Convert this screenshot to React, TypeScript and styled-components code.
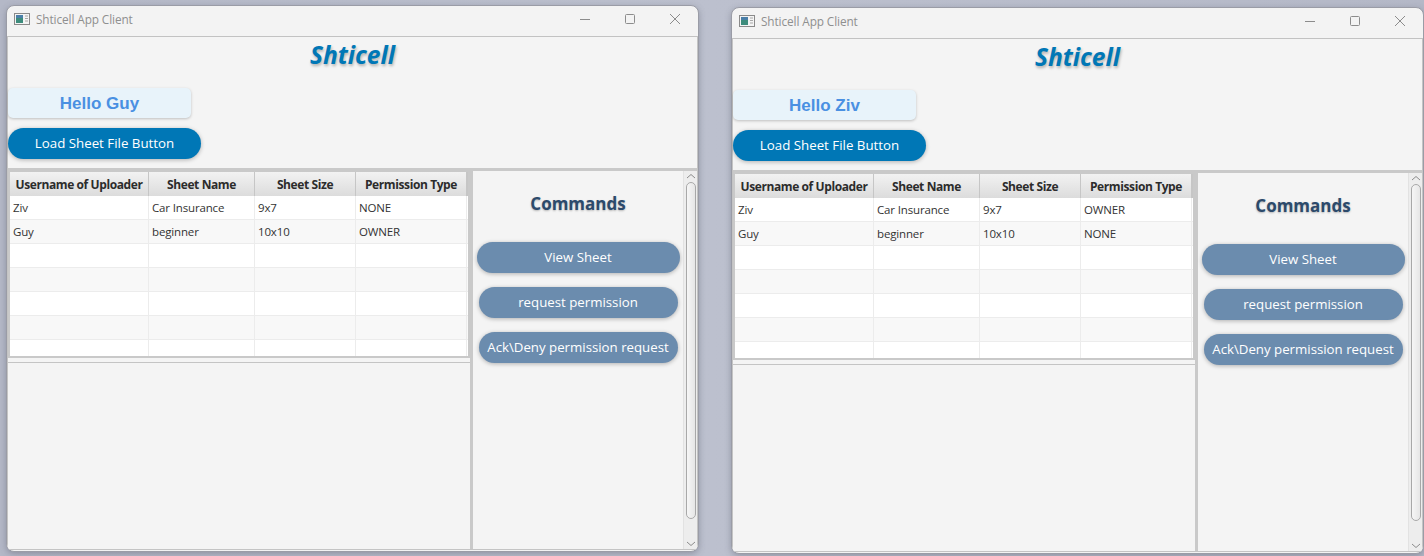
import { createGlobalStyle, styled } from "styled-components";

const GlobalStyle = createGlobalStyle`
  html, body {
    margin: 0;
    padding: 0;
    background: #b9bdcb;
    overflow: hidden;
  }
  #root {
    width: 1424px;
    height: 556px;
  }
`;

const Desktop = styled.div`
  position: relative;
  width: 1424px;
  height: 556px;
  overflow: hidden;
  background: linear-gradient(90deg, #b4b8c7 0%, #bcc0ce 50%, #b4b8c7 100%);
  font-family: "Open Sans", "Noto Sans", sans-serif;
`;

const Window = styled.div<{ $left: number; $top: number }>`
  position: absolute;
  left: ${(p) => p.$left}px;
  top: ${(p) => p.$top}px;
  width: 693px;
  height: 547px;
  box-sizing: border-box;
  display: flex;
  flex-direction: column;
  background: #f3f3f3;
  border: 1px solid #9a9ca6;
  border-radius: 8px;
  overflow: hidden;
  box-shadow: 0 2px 6px rgba(70, 72, 90, 0.35);
`;

const TitleBar = styled.div`
  height: 26px;
  flex: none;
  display: flex;
  align-items: center;
  padding: 0 1px 4px 7px;
  color: #8f8f8f;
  font-size: 11.8px;
`;

const AppIcon = styled.svg`
  width: 16px;
  height: 14px;
  margin-right: 6px;
`;

const WindowTitle = styled.span`
  flex: 1;
  letter-spacing: -0.1px;
`;

const CaptionButton = styled.div`
  width: 45px;
  height: 26px;
  display: flex;
  align-items: center;
  justify-content: center;
`;

const Scene = styled.div`
  flex: 1;
  min-height: 0;
  display: flex;
  flex-direction: column;
  margin-bottom: 1px;
  background: #f4f4f4;
  border: 1px solid #c4c4c4;
  border-top-color: #c2c2c2;
`;

const Header = styled.div`
  height: 134px;
  flex: none;
  box-sizing: border-box;
  display: flex;
  flex-direction: column;
  align-items: flex-start;
  border-bottom: 3px solid #c9c9c9;
`;

const AppTitle = styled.div`
  align-self: stretch;
  height: 51px;
  padding-top: 2px;
  box-sizing: border-box;
  text-align: center;
  font-size: 24.5px;
  line-height: 32px;
  font-weight: 700;
  font-style: italic;
  color: #0077b6;
  text-shadow: 1px 2px 3px rgba(0, 0, 0, 0.28);
`;

const Greeting = styled.div`
  width: 183px;
  height: 30px;
  box-sizing: border-box;
  padding-top: 2px;
  display: flex;
  align-items: center;
  justify-content: center;
  background: #e8f3fa;
  border-radius: 5px;
  color: #4a90e2;
  font-family: "Liberation Sans", Arial, sans-serif;
  font-size: 17px;
  font-weight: 700;
  box-shadow: 0 1px 3px rgba(0, 0, 0, 0.22);
`;

const LoadButton = styled.div`
  margin-top: 10px;
  width: 193px;
  height: 31px;
  box-sizing: border-box;
  padding-bottom: 1px;
  display: flex;
  align-items: center;
  justify-content: center;
  background: #0077b6;
  border-radius: 16px;
  color: #fff;
  font-size: 13.3px;
  box-shadow: 0 1px 4px rgba(0, 0, 0, 0.28);
`;

const Body = styled.div`
  flex: 1;
  min-height: 0;
  display: flex;
`;

const LeftPane = styled.div`
  width: 462px;
  flex: none;
  display: flex;
  flex-direction: column;
  border-right: 3px solid #c9c9c9;
`;

const TableFrame = styled.div`
  height: 187px;
  flex: none;
  box-sizing: border-box;
  border: 2px solid #c9c9c9;
  border-top-width: 1px;
  background: #fff;
  overflow: hidden;
`;

const TableRow = styled.div<{ $odd?: boolean }>`
  display: grid;
  grid-template-columns: 139px 106px 101px 111px 1fr;
  height: 24px;
  box-sizing: border-box;
  background: ${(p) => (p.$odd ? "#f8f8f8" : "#ffffff")};
  border-bottom: 1px solid #ececec;
`;

const HeadRow = styled.div`
  display: grid;
  grid-template-columns: 139px 106px 101px 111px 1fr;
  height: 24px;
`;

const HeadCell = styled.div`
  display: flex;
  align-items: center;
  justify-content: center;
  border-right: 1px solid #c6c6c6;
  background: linear-gradient(#f2f2f2, #dcdcdc);
  color: #2c2c2c;
  font-size: 12px;
  font-weight: 700;
  white-space: nowrap;
  letter-spacing: -0.4px;
`;

const Cell = styled.div`
  display: flex;
  align-items: center;
  padding-left: 3px;
  border-right: 1px solid #ececec;
  color: #333;
  font-size: 11.5px;
  white-space: nowrap;
  letter-spacing: -0.15px;
`;

const LowerPane = styled.div`
  flex: 1;
  margin-top: 4px;
  border-top: 1px solid #c4c4c4;
  background: #f4f4f4;
`;

const RightPane = styled.div`
  flex: 1;
  min-width: 0;
  display: flex;
`;

const Commands = styled.div`
  width: 210px;
  flex: none;
  display: flex;
  flex-direction: column;
  align-items: center;
  padding-top: 21px;
  box-sizing: border-box;
`;

const CommandsTitle = styled.div`
  height: 50px;
  color: #2c4a6b;
  font-size: 17px;
  line-height: 24px;
  font-weight: 700;
  text-shadow: 0 1px 2px rgba(0, 0, 0, 0.25);
`;

const CommandButton = styled.div<{ $wide?: boolean }>`
  width: ${(p) => (p.$wide ? 203 : 199)}px;
  height: 31px;
  box-sizing: border-box;
  padding-bottom: 1px;
  margin-bottom: 14px;
  display: flex;
  align-items: center;
  justify-content: center;
  background: #6b8cae;
  border-radius: 16px;
  color: #fff;
  font-size: 13.25px;
  white-space: nowrap;
  box-shadow: 0 1px 4px rgba(0, 0, 0, 0.28);
`;

const ScrollBar = styled.div`
  flex: 1;
  display: flex;
  flex-direction: column;
  align-items: center;
  background: #ededed;
  border-left: 1px solid #e2e2e2;
`;

const ScrollArrow = styled.svg<{ $end?: boolean }>`
  width: 10px;
  height: 11px;
  flex: none;
  margin-top: ${(p) => (p.$end ? "auto" : "0")};
`;

const ScrollThumb = styled.div`
  width: 10px;
  height: 337px;
  flex: none;
  box-sizing: border-box;
  background: linear-gradient(90deg, #f6f6f6, #e6e6e6);
  border: 1px solid #a8a8a8;
  border-radius: 5px;
`;

type Sheet = { user: string; name: string; size: string; permission: string };

function SheetTable({ rows }: { rows: Sheet[] }) {
  const empty = [0, 1, 2, 3, 4];
  return (
    <TableFrame>
      <HeadRow>
        <HeadCell>Username of Uploader</HeadCell>
        <HeadCell>Sheet Name</HeadCell>
        <HeadCell>Sheet Size</HeadCell>
        <HeadCell>Permission Type</HeadCell>
        <HeadCell />
      </HeadRow>
      {rows.map((r, i) => (
        <TableRow key={r.user} $odd={i % 2 === 1}>
          <Cell>{r.user}</Cell>
          <Cell>{r.name}</Cell>
          <Cell>{r.size}</Cell>
          <Cell>{r.permission}</Cell>
          <Cell />
        </TableRow>
      ))}
      {empty.map((n) => (
        <TableRow key={n} $odd={n % 2 === 1}>
          <Cell />
          <Cell />
          <Cell />
          <Cell />
          <Cell />
        </TableRow>
      ))}
    </TableFrame>
  );
}

function ClientWindow({
  left,
  top,
  user,
  rows,
}: {
  left: number;
  top: number;
  user: string;
  rows: Sheet[];
}) {
  return (
    <Window $left={left} $top={top}>
      <TitleBar>
        <AppIcon viewBox="0 0 16 14">
          <rect x="0.5" y="1.5" width="15" height="11" fill="#f4f4f4" stroke="#8a8a8a" />
          <rect x="2" y="3" width="7" height="8" fill="#3d8c7c" />
          <rect x="2" y="3" width="7" height="3" fill="#4a7fa8" />
          <path d="M11 4h3M11 6.5h3M11 9h3" stroke="#a8a8a8" />
        </AppIcon>
        <WindowTitle>Shticell App Client</WindowTitle>
        <CaptionButton>
          <svg width="12" height="12" viewBox="0 0 12 12">
            <path d="M1 6.5h10" stroke="#8c8c8c" />
          </svg>
        </CaptionButton>
        <CaptionButton>
          <svg width="12" height="12" viewBox="0 0 12 12">
            <rect x="1.5" y="1.5" width="9" height="9" rx="1" fill="none" stroke="#8c8c8c" />
          </svg>
        </CaptionButton>
        <CaptionButton>
          <svg width="12" height="12" viewBox="0 0 12 12">
            <path d="M1 1l10 10M11 1L1 11" stroke="#8c8c8c" />
          </svg>
        </CaptionButton>
      </TitleBar>
      <Scene>
        <Header>
          <AppTitle>Shticell</AppTitle>
          <Greeting>Hello {user}</Greeting>
          <LoadButton>Load Sheet File Button</LoadButton>
        </Header>
        <Body>
          <LeftPane>
            <SheetTable rows={rows} />
            <LowerPane />
          </LeftPane>
          <RightPane>
            <Commands>
              <CommandsTitle>Commands</CommandsTitle>
              <CommandButton $wide>View Sheet</CommandButton>
              <CommandButton>request permission</CommandButton>
              <CommandButton>Ack\Deny permission request</CommandButton>
            </Commands>
            <ScrollBar>
              <ScrollArrow viewBox="0 0 10 11">
                <path d="M1 7l4-3.5L9 7" fill="none" stroke="#8c8c8c" />
              </ScrollArrow>
              <ScrollThumb />
              <ScrollArrow $end viewBox="0 0 10 11">
                <path d="M1 4l4 3.5L9 4" fill="none" stroke="#8c8c8c" />
              </ScrollArrow>
            </ScrollBar>
          </RightPane>
        </Body>
      </Scene>
    </Window>
  );
}

export default function App() {
  return (
    <Desktop>
      <GlobalStyle />
      <ClientWindow
        left={6}
        top={5}
        user="Guy"
        rows={[
          { user: "Ziv", name: "Car Insurance", size: "9x7", permission: "NONE" },
          { user: "Guy", name: "beginner", size: "10x10", permission: "OWNER" },
        ]}
      />
      <ClientWindow
        left={731}
        top={7}
        user="Ziv"
        rows={[
          { user: "Ziv", name: "Car Insurance", size: "9x7", permission: "OWNER" },
          { user: "Guy", name: "beginner", size: "10x10", permission: "NONE" },
        ]}
      />
    </Desktop>
  );
}
